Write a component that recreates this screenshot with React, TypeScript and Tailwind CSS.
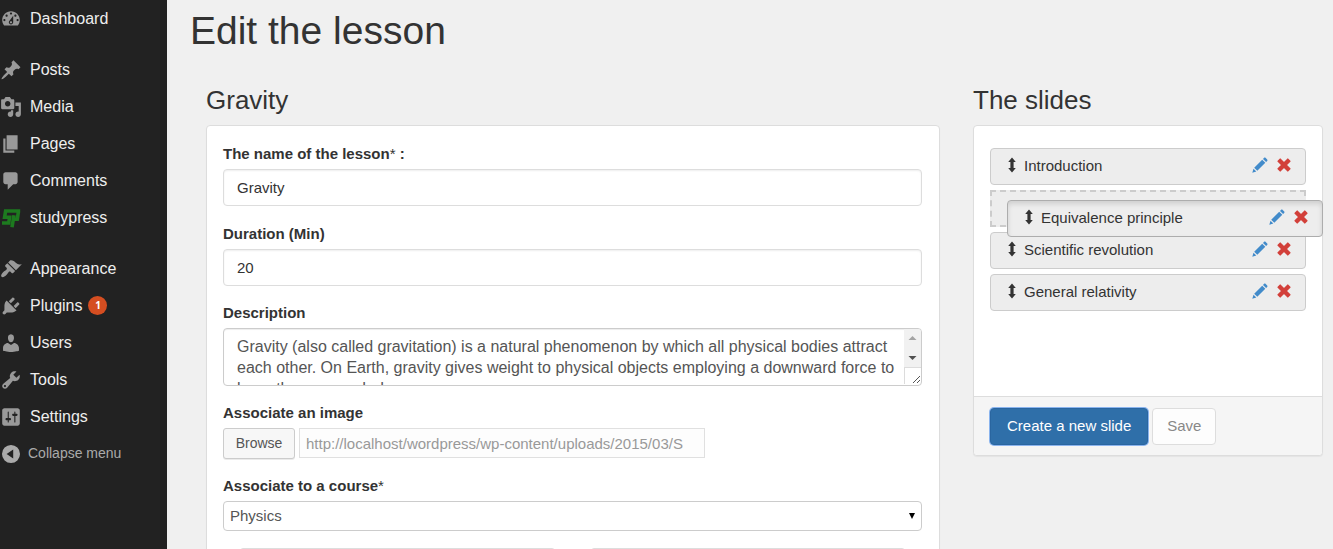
import React from "react";

const FONT = "font-['Liberation_Sans',Arial,sans-serif]";

const ICONS: Record<string, string> = {
  dashboard:
    "M3.76 16h12.48c1.1-1.37 1.76-3.11 1.76-5 0-4.42-3.58-8-8-8s-8 3.58-8 8c0 1.89.66 3.63 1.76 5zM10 4c.55 0 1 .45 1 1s-.45 1-1 1-1-.45-1-1 .45-1 1-1zM6 6c.55 0 1 .45 1 1s-.45 1-1 1-1-.45-1-1 .45-1 1-1zm8 0c.55 0 1 .45 1 1s-.45 1-1 1-1-.45-1-1 .45-1 1-1zm-5.37 5.55L12 7v6c0 1.1-.9 2-2 2s-2-.9-2-2c0-.57.24-1.08.63-1.45zM4 10c.55 0 1 .45 1 1s-.45 1-1 1-1-.45-1-1 .45-1 1-1zm12 0c.55 0 1 .45 1 1s-.45 1-1 1-1-.45-1-1 .45-1 1-1zm-5 3c0-.55-.45-1-1-1s-1 .45-1 1 .45 1 1 1 1-.45 1-1z",
  posts:
    "M10.44 3.02l1.82-1.82 6.36 6.35-1.83 1.82c-1.05-.68-2.48-.57-3.41.36l-.75.75c-.92.93-1.04 2.35-.35 3.41l-1.83 1.82-2.41-2.41-2.8 2.79c-.42.42-3.38 2.71-3.8 2.29s1.86-3.39 2.28-3.81l2.79-2.79L4.1 9.36l1.83-1.82c1.05.69 2.48.57 3.4-.36l.75-.75c.93-.92 1.05-2.35.36-3.41z",
  media:
    "M13 11V4c0-.55-.45-1-1-1h-1.67L9 1H5L3.67 3H2c-.55 0-1 .45-1 1v7c0 .55.45 1 1 1h10c.55 0 1-.45 1-1zM7 4.5c1.38 0 2.5 1.12 2.5 2.5S8.38 9.5 7 9.5 4.5 8.38 4.5 7 5.62 4.5 7 4.5zM14 6h5v10.5c0 1.38-1.12 2.5-2.5 2.5S14 17.88 14 16.5s1.12-2.5 2.5-2.5c.17 0 .34.02.5.05V9h-3V6zm-4 8.05V13h2v3.5c0 1.38-1.12 2.5-2.5 2.5S7 17.88 7 16.5 8.12 14 9.5 14c.17 0 .34.02.5.05z",
  pages: "M6 15V2h10v13H6zm-1 1h8v2H3V5h2v11z",
  comments:
    "M5 2h9c1.1 0 2 .9 2 2v7c0 1.1-.9 2-2 2h-2l-5 5v-5H5c-1.1 0-2-.9-2-2V4c0-1.1.9-2 2-2z",
  appearance:
    "M14.48 11.06L7.41 3.99l1.5-1.5c.5-.56 2.3-.47 3.51.32 1.21.8 1.43 1.28 2.91 2.1 1.18.64 2.45 1.26 4.45.85zm-.71.71L6.7 4.7 4.93 6.47c-.39.39-.39 1.02 0 1.41l1.06 1.06c.39.39.39 1.03 0 1.42-.6.6-1.43 1.11-2.21 1.69-.35.26-.7.53-1.01.84C1.43 14.23.4 16.08 1.4 17.07c.99 1 2.84-.03 4.18-1.36.31-.31.58-.66.85-1.02.57-.78 1.08-1.61 1.69-2.21.39-.39 1.02-.39 1.41 0l1.06 1.06c.39.39 1.02.39 1.41 0z",
  plugins:
    "M13.11 4.36L9.87 7.6 8 5.73l3.24-3.24c.35-.34 1.05-.2 1.56.32.52.51.66 1.21.31 1.55zm-8 1.77l.91-1.12 9.01 9.01-1.19.84c-.71.71-2.63 1.16-3.82 1.16H6.14L4.9 17.26c-.59.59-1.54.59-2.12 0-.59-.58-.59-1.53 0-2.12l1.24-1.24v-3.88c0-1.13.4-3.19 1.09-3.89zm7.26 3.97l3.24-3.24c.34-.35 1.04-.21 1.55.31.52.51.66 1.21.31 1.55l-3.24 3.25z",
  users:
    "M10 9.25c-2.27 0-2.73-3.44-2.73-3.44C7 4.02 7.82 2 9.97 2c2.16 0 2.98 2.02 2.71 3.81 0 0-.41 3.44-2.68 3.44zm0 2.57L12.72 10c2.39 0 4.52 2.33 4.52 4.53v2.49s-3.65 1.13-7.24 1.13c-3.65 0-7.24-1.13-7.24-1.13v-2.49c0-2.25 1.94-4.48 4.47-4.48z",
  tools:
    "M16.68 9.77c-1.34 1.34-3.3 1.67-4.95.99l-5.41 6.52c-.99.99-2.59.99-3.58 0s-.99-2.59 0-3.57l6.52-5.42c-.68-1.65-.35-3.61.99-4.95 1.28-1.28 3.12-1.62 4.72-1.06l-2.89 2.89 2.82 2.82 2.86-2.87c.53 1.58.18 3.39-1.08 4.65zM3.81 16.21c.4.39 1.04.39 1.43 0 .4-.4.4-1.04 0-1.43-.39-.4-1.03-.4-1.43 0-.39.39-.39 1.03 0 1.43z",
  settings:
    "M18 16V4c0-1.1-.9-2-2-2H4c-1.1 0-2 .9-2 2v12c0 1.1.9 2 2 2h12c1.1 0 2-.9 2-2zM8 11h1c.55 0 1 .45 1 1s-.45 1-1 1H8v1.5c0 .28-.22.5-.5.5s-.5-.22-.5-.5V13H6c-.55 0-1-.45-1-1s.45-1 1-1h1V5.5c0-.28.22-.5.5-.5s.5.22.5.5V11zm5-2h-1c-.55 0-1-.45-1-1s.45-1 1-1h1V5.5c0-.28.22-.5.5-.5s.5.22.5.5V7h1c.55 0 1 .45 1 1s-.45 1-1 1h-1v5.5c0 .28-.22.5-.5.5s-.5-.22-.5-.5V9z",
  collapse:
    "M10 1.8a8.2 8.2 0 1 0 0 16.4 8.2 8.2 0 0 0 0-16.4zM12 6v8L6 10z",
};

function MenuIcon({ name }: { name: string }) {
  if (name === "studypress") {
    return (
      <svg viewBox="0 0 22 22" className="size-[22px] shrink-0" fill="none" aria-hidden="true">
        <path
          d="M20.200 4H5.600L4.600 10.200H9.600L8.700 16H2M18.500 4L17.300 12.300H13.400M14 8.200L12 20.300"
          stroke="#1d7a1f"
          strokeWidth="3.600"
        />
      </svg>
    );
  }
  return (
    <svg viewBox="0 0 20 20" className="size-[22px] shrink-0" fill="currentColor" fillRule="evenodd" aria-hidden="true">
      <path d={ICONS[name]} />
    </svg>
  );
}

const MENU: { label: string; icon: string; badge?: string }[][] = [
  [{ label: "Dashboard", icon: "dashboard" }],
  [
    { label: "Posts", icon: "posts" },
    { label: "Media", icon: "media" },
    { label: "Pages", icon: "pages" },
    { label: "Comments", icon: "comments" },
    { label: "studypress", icon: "studypress" },
  ],
  [
    { label: "Appearance", icon: "appearance" },
    { label: "Plugins", icon: "plugins", badge: "1" },
    { label: "Users", icon: "users" },
    { label: "Tools", icon: "tools" },
    { label: "Settings", icon: "settings" },
  ],
];

function Sidebar() {
  return (
    <nav className="w-[167px] shrink-0 bg-[#222]" aria-label="Admin menu">
      <div className="flex flex-col gap-[14px]">
        {MENU.map((group, i) => (
          <ul key={i}>
            {group.map((item) => (
              <li key={item.label}>
                <a href="#" className="flex h-[37px] items-center text-[#999]">
                  <MenuIcon name={item.icon} />
                  <span className="ml-2 text-[16px] text-[#eee]">{item.label}</span>
                  {item.badge && (
                    <span className="ml-[6px] flex size-[19px] items-center justify-center rounded-full bg-[#d54e21] font-['Open_Sans',sans-serif] text-[10px] font-bold text-white">
                      {item.badge}
                    </span>
                  )}
                </a>
              </li>
            ))}
          </ul>
        ))}
      </div>
      <button type="button" className="flex h-[37px] w-full items-center gap-[6px] text-[14px] text-[#aaa]">
        <MenuIcon name="collapse" />
        Collapse menu
      </button>
    </nav>
  );
}

const LABEL = "mb-[5px] block h-[21px] w-fit text-[15px] leading-[21px] font-bold text-[#333]";
const TEXT_INPUT =
  "block h-[37px] w-full rounded border border-[#ddd] bg-white px-[13px] text-[15px] text-[#333] shadow-[inset_0_1px_2px_rgba(0,0,0,0.07)]";

function Star() {
  return <span className="font-normal">*</span>;
}

function LessonForm() {
  return (
    <form className="rounded border border-[#ddd] bg-white pt-[17px] pr-[17px] pb-8 pl-4 shadow-[0_1px_1px_rgba(0,0,0,0.05)]">
      <div className="mb-[17px]">
        <label htmlFor="name" className={LABEL}>
          The name of the lesson
          <Star /> :
        </label>
        <input id="name" type="text" defaultValue="Gravity" className={TEXT_INPUT} />
      </div>
      <div className="mb-4">
        <label htmlFor="duration" className={LABEL}>
          Duration (Min)
        </label>
        <input id="duration" type="text" defaultValue="20" className={TEXT_INPUT} />
      </div>
      <div className="mb-4">
        <label htmlFor="description" className={LABEL}>
          Description
        </label>
        <div className="relative h-[58px] overflow-hidden rounded border border-[#ccc] shadow-[inset_0_1px_1px_rgba(0,0,0,0.075)]">
          <textarea
            id="description"
            className="block h-full w-full resize-none overflow-hidden bg-transparent pt-[7px] pr-6 pl-[13px] text-[16px] leading-[21px] text-[#555]"
            defaultValue={
              "Gravity (also called gravitation) is a natural phenomenon by which all physical bodies attract each other. On Earth, gravity gives weight to physical objects employing a downward force to keep them grounded."
            }
          />
          <svg viewBox="0 0 17 56" className="absolute top-0 right-0 h-14 w-[17px]" aria-hidden="true">
            <path d="M0 0h17v38H0z" fill="#f1f1f1" />
            <path d="M0 38.500h17M.5 38v17" stroke="#dcdcdc" />
            <path d="M4.500 11L8.500 7l4 4z" fill="#a3a3a3" />
            <path d="M4.500 27h8l-4 4z" fill="#505050" />
            <path d="M9 54l7-7M13 54l3-3" stroke="#555" />
          </svg>
        </div>
      </div>
      <div className="mb-4">
        <label htmlFor="image" className={LABEL}>
          Associate an image
        </label>
        <div className="flex gap-1">
          <button
            type="button"
            className="h-[31px] w-[72px] rounded-[3px] border border-[#ccc] bg-[#f7f7f7] text-[14px] text-[#555] shadow-[0_1px_0_rgba(0,0,0,0.08)]"
          >
            Browse
          </button>
          <input
            id="image"
            type="text"
            disabled
            defaultValue="http://localhost/wordpress/wp-content/uploads/2015/03/S"
            className="h-[30px] w-[406px] border border-[#e0e0e0] bg-[#fdfdfd] px-[6px] text-[15px] text-[#999]"
          />
        </div>
      </div>
      <div className="mb-[17px]">
        <label htmlFor="course" className={LABEL}>
          Associate to a course
          <Star />
        </label>
        <div className="relative">
          <select
            id="course"
            className="block h-[30px] w-full appearance-none rounded border border-[#ccc] bg-white px-[6px] text-[15px] text-[#555]"
          >
            <option>Physics</option>
          </select>
          <svg viewBox="0 0 6 6" className="pointer-events-none absolute top-3 right-[7px] size-[6px]" aria-hidden="true">
            <path d="M0 0h6L3 6z" fill="#000" />
          </svg>
        </div>
      </div>
      <div className="flex gap-9 px-[17px]">
        <input type="text" aria-label="First option" className="h-[37px] min-w-0 flex-1 rounded-[3px] border border-[#ddd]" />
        <input type="text" aria-label="Second option" className="h-[37px] min-w-0 flex-1 rounded-[3px] border border-[#ddd]" />
      </div>
    </form>
  );
}

function SlideRow({ title, dragging }: { title: string; dragging?: boolean }) {
  return (
    <div
      className={
        dragging
          ? "flex h-[37px] items-center rounded border border-[#adadad] bg-[#ededed] pr-[13px] pl-4 shadow-[inset_0_3px_5px_rgba(0,0,0,0.125)]"
          : "flex h-[37px] items-center rounded border border-[#ccc] bg-[#ededed] pr-[13px] pl-4"
      }
    >
      <svg viewBox="0 0 10 16" className="mb-1 h-4 w-[10px]" aria-hidden="true">
        <path d="M5 .5l3.800 4.500H6.600v6h2.200L5 15.500 1.200 11h2.200V5H1.200z" fill="#333" />
      </svg>
      <span className="ml-[7px] flex-1 text-[15px] text-[#333]">{title}</span>
      <span className="mb-1 flex items-center gap-2">
        <button type="button" aria-label={`Edit ${title}`}>
          <svg viewBox="0 0 16 16" className="block size-4" fill="#428bca" aria-hidden="true">
            <path d="M.3 15.700l1.200-4 2.800 2.800zM2.200 10.700L10.200 2.700l3.100 3.100-8 8zM11 1.900l1.100-1.100c.4-.4 1-.4 1.400 0l1.700 1.700c.4.4.4 1 0 1.400l-1.100 1.100z" />
          </svg>
        </button>
        <button type="button" aria-label={`Delete ${title}`}>
          <svg viewBox="0 0 16 16" className="block size-4" fill="#d2403a" aria-hidden="true">
            <path
              d="M4.200 2.200L8 6l3.800-3.800 2 2L10 8l3.800 3.800-2 2L8 10l-3.800 3.800-2-2L6 8 2.200 4.200z"
              stroke="#d2403a"
              strokeWidth="1.600"
              strokeLinejoin="round"
            />
          </svg>
        </button>
      </span>
    </div>
  );
}

function SlidesPanel() {
  return (
    <div className="rounded border border-[#ddd] bg-white shadow-[0_1px_1px_rgba(0,0,0,0.05)]">
      <ul className="flex min-h-[270px] flex-col gap-[5px] px-4 pt-[22px] pb-4">
        <li>
          <SlideRow title="Introduction" />
        </li>
        <li className="relative h-[37px] border-2 border-dashed border-[#ccc] bg-[#ededed]">
          <div className="absolute top-2 left-[15px] w-[316px]">
            <SlideRow title="Equivalence principle" dragging />
          </div>
        </li>
        <li>
          <SlideRow title="Scientific revolution" />
        </li>
        <li>
          <SlideRow title="General relativity" />
        </li>
      </ul>
      <div className="flex gap-1 rounded-b border-t border-[#ddd] bg-[#f5f5f5] px-4 pt-[11px] pb-[10px]">
        <button
          type="button"
          className="h-[37px] rounded border border-[#2a66a0] bg-[#2f6fa9] px-4 text-[15px] text-white ring-1 ring-[#8ab4ee]"
        >
          Create a new slide
        </button>
        <button type="button" className="h-[37px] rounded border border-[#ddd] bg-[#fdfdfd] px-[14px] text-[15px] text-[#888]">
          Save
        </button>
      </div>
    </div>
  );
}

export default function App() {
  return (
    <div className={`${FONT} flex h-screen overflow-hidden bg-[#f0f0f0] text-[#333]`}>
      <Sidebar />
      <main className="min-w-0 flex-1 pr-[10px] pl-[23px]">
        <h1 className="pt-2 text-[39px] leading-[46px] text-[#333]">Edit the lesson</h1>
        <div className="mt-[30px] flex gap-[33px] pl-4">
          <section className="min-w-0 flex-1">
            <h2 className="mb-[9px] text-[26px] leading-8">Gravity</h2>
            <LessonForm />
          </section>
          <section className="w-[350px] shrink-0">
            <h2 className="mb-[9px] text-[26px] leading-8">The slides</h2>
            <SlidesPanel />
          </section>
        </div>
      </main>
    </div>
  );
}
